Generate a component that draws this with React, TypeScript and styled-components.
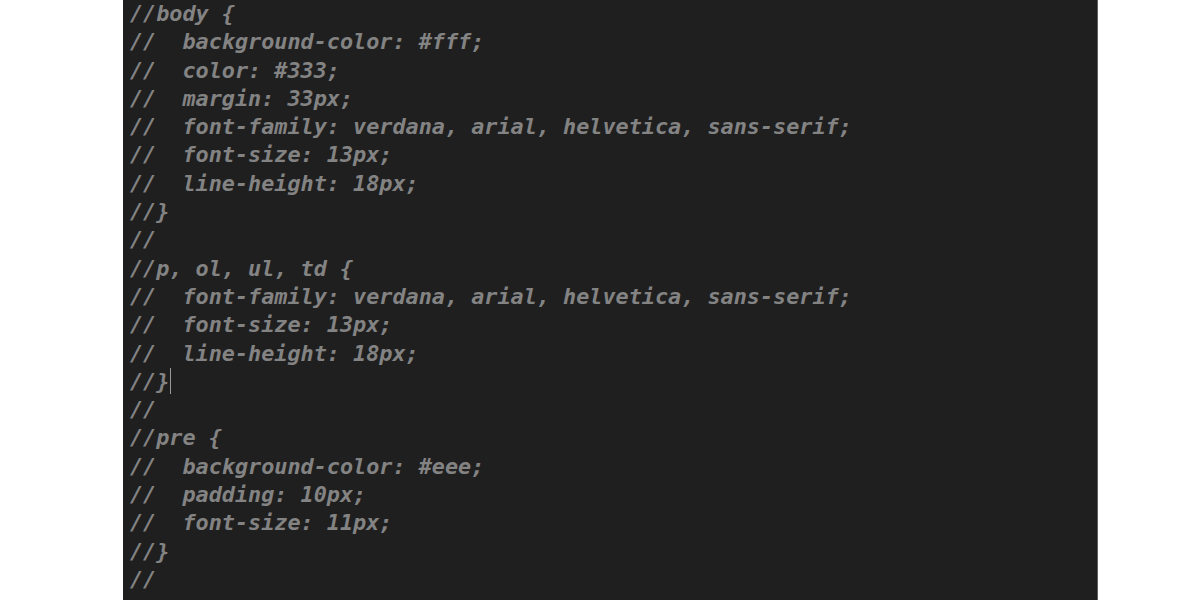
import React from "react";
import styled, { createGlobalStyle } from "styled-components";

const Global = createGlobalStyle`
  html, body { margin: 0; padding: 0; background: #ffffff; }
  body { width: 1200px; height: 600px; overflow: hidden; }
`;

const Page = styled.div`
  width: 1200px;
  height: 600px;
  display: flex;
  justify-content: flex-start;
  background: #ffffff;
`;

const Editor = styled.div`
  margin-left: 123px;
  width: 975px;
  height: 600px;
  background: #1f1f1f;
  border-right: 1px solid #5e5e5e;
  overflow: hidden;
  padding: 0 0 0 7px;
  box-sizing: border-box;
`;

const Code = styled.pre`
  margin: 0;
  font-family: "DejaVu Sans Mono", "Liberation Mono", monospace;
  font-size: 21.8px;
  line-height: 28.3px;
  font-weight: bold;
  font-style: italic;
  color: #838383;
  white-space: pre;
`;

const Line = styled.div`
  height: 28.3px;
`;

const Caret = styled.span`
  display: inline-block;
  width: 1px;
  height: 26px;
  background: #9a9a9a;
  vertical-align: -5px;
  margin-left: 1px;
`;

const lines = [
  "//body {",
  "//  background-color: #fff;",
  "//  color: #333;",
  "//  margin: 33px;",
  "//  font-family: verdana, arial, helvetica, sans-serif;",
  "//  font-size: 13px;",
  "//  line-height: 18px;",
  "//}",
  "//",
  "//p, ol, ul, td {",
  "//  font-family: verdana, arial, helvetica, sans-serif;",
  "//  font-size: 13px;",
  "//  line-height: 18px;",
  "//}",
  "//",
  "//pre {",
  "//  background-color: #eee;",
  "//  padding: 10px;",
  "//  font-size: 11px;",
  "//}",
  "//",
];

export default function App() {
  return (
    <>
      <Global />
      <Page>
        <Editor>
          <Code>
            {lines.map((l, i) => (
              <Line key={i}>
                {l}
                {i === 13 && <Caret />}
              </Line>
            ))}
          </Code>
        </Editor>
      </Page>
    </>
  );
}
